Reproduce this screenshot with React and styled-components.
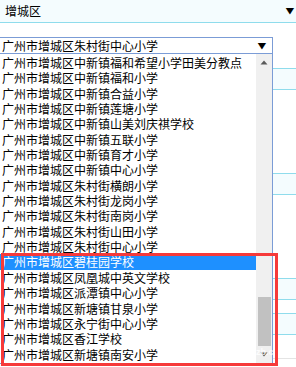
import React from "react";
import styled, { createGlobalStyle } from "styled-components";

const GlobalStyle = createGlobalStyle`
  body {
    margin: 0;
    background: #ffffff;
    font-family: "Noto Sans CJK SC", "Noto Sans", sans-serif;
    font-size: 12px;
    color: #000000;
  }
`;

const Page = styled.div`
  position: relative;
  width: 296px;
  height: 367px;
  overflow: hidden;
  background: #ffffff;
`;

const Header = styled.div`
  display: flex;
  align-items: center;
  justify-content: space-between;
  height: 22px;
  padding: 0 2px 0 5px;
  background: #f4fcfe;
  border-bottom: 1px solid #8fdcec;
  line-height: 22px;
`;

const Caret = styled.span`
  font-size: 8px;
  line-height: 1;
  color: #000000;
  transform: scaleX(1.1);
`;

const SelectWrap = styled.div`
  position: relative;
  margin-top: 14px;
  width: 273px;
  z-index: 2;
`;

const SelectBox = styled.div`
  display: flex;
  align-items: center;
  justify-content: space-between;
  box-sizing: border-box;
  height: 17px;
  padding: 0 6px 0 2px;
  border: 1px solid #7b9cd6;
  border-left: none;
  background: #ffffff;
  line-height: 15px;
`;

const Dropdown = styled.div`
  position: absolute;
  top: 100%;
  left: 0;
  display: flex;
  box-sizing: border-box;
  width: 273px;
  padding-top: 1px;
  background: #ffffff;
  border-right: 1px solid #7b9cd6;
  border-bottom: 1px solid #7b9cd6;
`;

const Options = styled.ul`
  flex: 1;
  margin: 0;
  padding: 0;
  list-style: none;
`;

const Option = styled.li`
  height: 15.35px;
  padding-left: 2px;
  line-height: 15.35px;
  white-space: nowrap;
  overflow: hidden;
  background: ${(p) => (p.$selected ? "#1e90ff" : "transparent")};
  color: ${(p) => (p.$selected ? "#ffffff" : "#000000")};
`;

const Scrollbar = styled.div`
  display: flex;
  flex-direction: column;
  width: 16px;
  margin-top: -1px;
  background: #f0f0f0;
`;

const ScrollArrow = styled.div`
  display: flex;
  align-items: center;
  justify-content: center;
  height: 17px;
`;

const Track = styled.div`
  flex: 1;
`;

const Thumb = styled.div`
  width: 13px;
  height: 49px;
  margin-top: ${(p) => p.$offset}px;
  margin-left: 2px;
  background: #c1c1c1;
`;

const Band = styled.div`
  height: 20px;
  margin-top: ${(p) => p.$gap}px;
  background: #f4fcfe;
  border-top: 1px solid #8fdcec;
  border-bottom: 1px solid #8fdcec;
`;

const Rule = styled.div`
  height: 1px;
  margin-top: ${(p) => p.$gap}px;
  background: #e4e4e4;
`;

const Highlight = styled.div`
  position: absolute;
  left: 1px;
  top: 253px;
  width: 277px;
  height: 113px;
  box-sizing: border-box;
  border: 3px solid #f63a3a;
  z-index: 3;
  pointer-events: none;
`;

const Watermark = styled.span`
  position: absolute;
  left: 256px;
  top: 347px;
  font-family: "Liberation Sans", sans-serif;
  font-size: 9px;
  font-weight: bold;
  color: rgba(255, 255, 255, 0.85);
  z-index: 4;
`;

const Triangle = ({ up }) => (
  <svg width="8" height="5" viewBox="0 0 8 5">
    <path d={up ? "M0.5 4.5 L4 0.5 L7.5 4.5 Z" : "M0.5 0.5 L4 4.5 L7.5 0.5 Z"} fill="#5a5a5a" />
  </svg>
);

const schools = [
  "广州市增城区中新镇福和希望小学田美分教点",
  "广州市增城区中新镇福和小学",
  "广州市增城区中新镇合益小学",
  "广州市增城区中新镇莲塘小学",
  "广州市增城区中新镇山美刘庆祺学校",
  "广州市增城区中新镇五联小学",
  "广州市增城区中新镇育才小学",
  "广州市增城区中新镇中心小学",
  "广州市增城区朱村街横朗小学",
  "广州市增城区朱村街龙岗小学",
  "广州市增城区朱村街南岗小学",
  "广州市增城区朱村街山田小学",
  "广州市增城区朱村街中心小学",
  "广州市增城区碧桂园学校",
  "广州市增城区凤凰城中英文学校",
  "广州市增城区派潭镇中心小学",
  "广州市增城区新塘镇甘泉小学",
  "广州市增城区永宁街中心小学",
  "广州市增城区香江学校",
  "广州市增城区新塘镇南安小学",
];

export default function App() {
  const selected = "广州市增城区碧桂园学校";

  return (
    <Page>
      <GlobalStyle />
      <Header>
        <span>增城区</span>
        <Caret>▼</Caret>
      </Header>
      <SelectWrap>
        <SelectBox>
          <span>广州市增城区朱村街中心小学</span>
          <Caret>▼</Caret>
        </SelectBox>
        <Dropdown>
          <Options>
            {schools.map((name) => (
              <Option key={name} $selected={name === selected}>
                {name}
              </Option>
            ))}
          </Options>
          <Scrollbar>
            <ScrollArrow>
              <Triangle up />
            </ScrollArrow>
            <Track>
              <Thumb $offset={226} />
            </Track>
            <ScrollArrow>
              <Triangle />
            </ScrollArrow>
          </Scrollbar>
        </Dropdown>
      </SelectWrap>
      <Band $gap={14} />
      <Band $gap={83} />
      <Band $gap={83} />
      <Band $gap={13} />
      <Rule $gap={23} />
      <Highlight />
      <Watermark>zb.c</Watermark>
    </Page>
  );
}
